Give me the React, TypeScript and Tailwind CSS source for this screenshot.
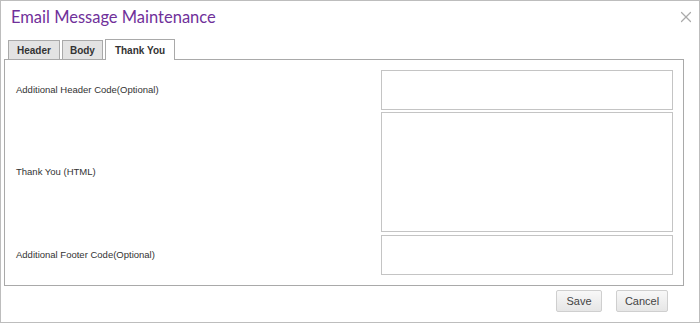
import { X } from 'lucide-react';

const Field = ({ label, tall }: { label: string; tall?: boolean }) => (
  <div className="flex items-center">
    <div className="flex-1 pl-[11px] text-[9.5px] text-[#333]">{label}</div>
    <textarea
      className={`w-[292px] resize-none border border-[#c4c4c4] bg-white outline-none ${tall ? 'h-[120px]' : 'h-[40px]'}`}
    />
  </div>
);

export default function App() {
  return (
    <div
      className="flex h-[323px] w-[700px] flex-col border border-[#bdbdbd] bg-white"
      style={{ fontFamily: '"Liberation Sans", Arial, sans-serif' }}
    >
      {/* Title bar */}
      <div className="flex h-[32px] items-center justify-between pl-[10px] pr-[4px]">
        <span
          className="text-[16.5px] text-[#70309a]"
          style={{ fontFamily: 'Lato, "Open Sans", sans-serif' }}
        >
          Email Message Maintenance
        </span>
        <X className="h-[18px] w-[18px] text-[#ababab]" strokeWidth={1.6} />
      </div>

      {/* Tabs */}
      <div className="flex items-end gap-[2px] pl-[7px] pt-[6px]">
        <div className="flex h-[19px] items-center border border-b-0 border-[#a9a9a9] bg-[#e3e3e3] px-[8px] text-[10px] font-bold text-[#333]">
          Header
        </div>
        <div className="flex h-[19px] items-center border border-b-0 border-[#a9a9a9] bg-[#e3e3e3] px-[7px] text-[10px] font-bold text-[#333]">
          Body
        </div>
        <div className="relative z-10 mb-[-1px] flex h-[21px] items-center border border-b-0 border-[#a9a9a9] bg-white px-[9px] text-[10px] font-bold text-[#333]">
          Thank You
        </div>
      </div>

      {/* Panel */}
      <div className="ml-[3px] mr-[15px] flex flex-col gap-[2px] border border-[#a9a9a9] pb-[10px] pr-[10px] pt-[10px]">
        <Field label="Additional Header Code(Optional)" />
        <Field label="Thank You (HTML)" tall />
        <div className="pt-[1px]">
          <Field label="Additional Footer Code(Optional)" />
        </div>
      </div>

      {/* Footer */}
      <div className="flex justify-end gap-[14px] pr-[31px] pt-[4px]">
        <button className="h-[22px] w-[46px] rounded-[2px] border border-[#cfcfcf] bg-gradient-to-b from-[#f8f8f8] to-[#e6e6e6] text-[11px] text-[#444]">
          Save
        </button>
        <button className="h-[22px] w-[52px] rounded-[2px] border border-[#cfcfcf] bg-gradient-to-b from-[#f8f8f8] to-[#e6e6e6] text-[11px] text-[#444]">
          Cancel
        </button>
      </div>
    </div>
  );
}
